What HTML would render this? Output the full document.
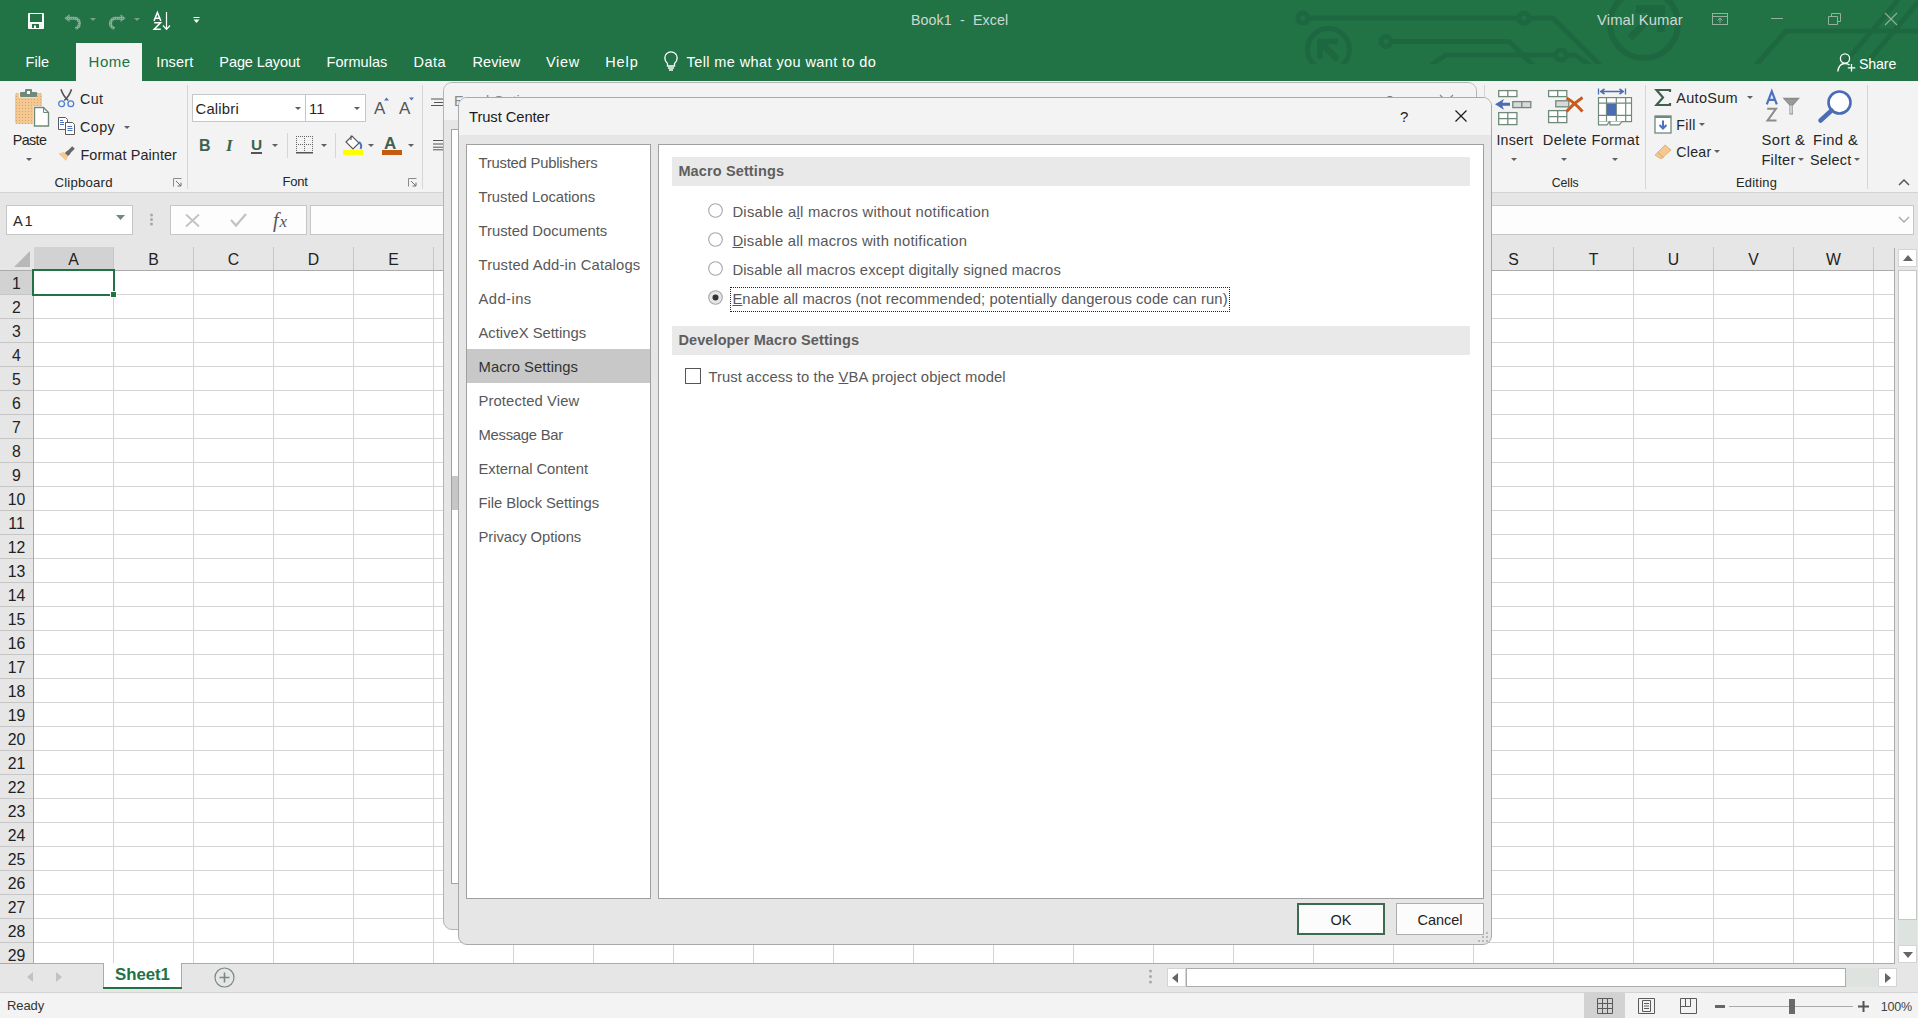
<!DOCTYPE html>
<html><head><meta charset="utf-8">
<style>
*{margin:0;padding:0;box-sizing:border-box}
html,body{width:1918px;height:1018px;overflow:hidden;background:#fff;font-family:"Liberation Sans",sans-serif;color:#262626}
.a{position:absolute;white-space:nowrap}
svg.a{overflow:visible}
</style></head><body>
<div class="a" style="left:0px;top:0px;width:1918px;height:81px;background:#217346"></div>
<svg class="a" style="left:0;top:0" width="1918" height="81" viewBox="0 0 1918 81">
<defs><clipPath id="cp"><rect x="0" y="0" width="1918" height="64"/></clipPath></defs>
<g fill="none" stroke="#1d6840" stroke-width="5" clip-path="url(#cp)">
<path d="M1303 18 H1553 L1600 65"/>
<circle cx="1303" cy="18" r="5" fill="#217346"/>
<circle cx="1524" cy="18" r="5" fill="#217346"/>
<path d="M1386 41.5 H1509 L1533 65"/>
<circle cx="1386" cy="41.5" r="5" fill="#217346"/>
<path d="M1431 65 L1446 55 H1575 L1590 65"/>
<circle cx="1561" cy="55" r="5" fill="#217346"/>
<circle cx="1328.4" cy="49.5" r="21" stroke-width="5"/>
<path d="M1320 42 L1338 60" stroke-width="6.5"/>
<path d="M1317 41.5 H1338 M1320 39 V59" stroke-width="5.5"/>
<circle cx="1644" cy="24" r="34" stroke-width="6"/>
<path d="M1630 38 L1656 12" stroke-width="7"/>
<path d="M1636 9 H1661 V32" stroke-width="8"/>
<path d="M1756 65 L1786 31 H1918"/>
<path d="M1843 65 L1898 0"/>
<path d="M1865 65 L1920 0"/>
</g></svg>
<svg class="a" style="left:28px;top:13px;" width="16" height="16" viewBox="0 0 16 16"><rect x="0" y="0" width="16" height="16" rx="1" fill="#fff"/><rect x="2" y="1" width="12" height="8" fill="#217346"/><rect x="1.5" y="10.5" width="13" height="4.5" fill="#f0f0f0"/><rect x="4" y="11" width="7" height="4" fill="#217346"/><rect x="6" y="12.5" width="2" height="2.5" fill="#fff"/></svg>
<svg class="a" style="left:63px;top:13px;" width="20" height="17" viewBox="0 0 20 17"><defs><pattern id="qd" width="2" height="2" patternUnits="userSpaceOnUse"><rect width="2" height="2" fill="#93a79b"/><rect x="1" y="1" width="1" height="1" fill="#217346" opacity="0.45"/></pattern></defs><path d="M1.3 5.2 L6.5 1.3 L6.5 9.1 Z" fill="url(#qd)"/><path d="M6 5.2 H12 A5.2 5.2 0 0 1 14 14.8 L12.5 15.5" fill="none" stroke="url(#qd)" stroke-width="3"/></svg>
<svg class="a" style="left:90px;top:18px;" width="6" height="3" viewBox="0 0 6 3"><path d="M0 0 H6 L3 3 Z" fill="#93a79b" opacity="0.8"/></svg>
<svg class="a" style="left:107px;top:13px;" width="20" height="17" viewBox="0 0 20 17"><path d="M18.7 5.2 L13.5 1.3 L13.5 9.1 Z" fill="url(#qd)"/><path d="M14 5.2 H8 A5.2 5.2 0 0 0 6 14.8 L7.5 15.5" fill="none" stroke="url(#qd)" stroke-width="3"/></svg>
<svg class="a" style="left:134px;top:18px;" width="6" height="3" viewBox="0 0 6 3"><path d="M0 0 H6 L3 3 Z" fill="#93a79b" opacity="0.8"/></svg>
<svg class="a" style="left:153px;top:12px;" width="18" height="18" viewBox="0 0 18 18"><path d="M1 8.9 L4.4 0.5 L7.8 8.9 M2.3 6.2 H6.5" fill="none" stroke="#fff" stroke-width="1.5"/><path d="M1.2 10.8 H7.5 L1.2 17.2 H7.8" fill="none" stroke="#fff" stroke-width="1.5"/><path d="M13.5 0 V17 M10 13.5 L13.5 17.3 L17 13.5" fill="none" stroke="#fff" stroke-width="1.2"/></svg>
<svg class="a" style="left:193px;top:17px;" width="7" height="6" viewBox="0 0 7 6"><rect x="0.5" y="0" width="6" height="1" fill="#fff"/><path d="M0.5 2.5 H6.5 L3.5 6 Z" fill="#fff"/></svg>
<div class="a" id="f0" style="left:911px;top:13.00px;font-size:14.2px;line-height:14.2px;color:#cfd8d2;font-weight:400;letter-spacing:0.127px;">Book1&nbsp;&nbsp;-&nbsp;&nbsp;Excel</div>
<div class="a" id="f1" style="left:1597px;top:13.00px;font-size:14.8px;line-height:14.8px;color:#cfd8d2;font-weight:400;letter-spacing:0.136px;">Vimal Kumar</div>
<svg class="a" style="left:1712px;top:13px;" width="16" height="12" viewBox="0 0 16 12"><rect x="0.5" y="0.5" width="15" height="11" fill="none" stroke="#94b19f" stroke-width="1"/><path d="M0.5 3.5 H15.5 M8 10 V5 M5.5 7.5 L8 5 L10.5 7.5" fill="none" stroke="#94b19f" stroke-width="1"/></svg>
<div class="a" style="left:1771px;top:18px;width:12px;height:1px;background:#94b19f"></div>
<svg class="a" style="left:1828px;top:13px;" width="13" height="12" viewBox="0 0 13 12"><path d="M0.5 3.5 H9.5 V11.5 H0.5 Z M3.5 3.5 V0.5 H12.5 V8.5 H9.5" fill="none" stroke="#94b19f" stroke-width="1"/></svg>
<svg class="a" style="left:1885px;top:13px;" width="12" height="12" viewBox="0 0 12 12"><path d="M0 0 L12 12 M12 0 L0 12" fill="none" stroke="#94b19f" stroke-width="1.1"/></svg>
<div class="a" style="left:76px;top:43px;width:66px;height:38px;background:#f3f3f3"></div>
<div class="a" id="f2" style="left:25.6px;top:55.00px;font-size:14.5px;line-height:14.5px;color:#fff;font-weight:400;letter-spacing:0.075px;">File</div>
<div class="a" id="f3" style="left:88.5px;top:54.00px;font-size:15px;line-height:15px;color:#217346;font-weight:400;letter-spacing:0.561px;">Home</div>
<div class="a" id="f4" style="left:156.2px;top:55.00px;font-size:14.5px;line-height:14.5px;color:#fff;font-weight:400;letter-spacing:0.167px;">Insert</div>
<div class="a" id="f5" style="left:219.3px;top:55.00px;font-size:14.5px;line-height:14.5px;color:#fff;font-weight:400;letter-spacing:-0.074px;">Page Layout</div>
<div class="a" id="f6" style="left:326.5px;top:55.00px;font-size:14.5px;line-height:14.5px;color:#fff;font-weight:400;letter-spacing:0.052px;">Formulas</div>
<div class="a" id="f7" style="left:413.6px;top:55.00px;font-size:14.5px;line-height:14.5px;color:#fff;font-weight:400;letter-spacing:0.486px;">Data</div>
<div class="a" id="f8" style="left:472.6px;top:55.00px;font-size:14.5px;line-height:14.5px;color:#fff;font-weight:400;letter-spacing:0.011px;">Review</div>
<div class="a" id="f9" style="left:546px;top:55.00px;font-size:14.5px;line-height:14.5px;color:#fff;font-weight:400;letter-spacing:0.709px;">View</div>
<div class="a" id="f10" style="left:605.2px;top:55.00px;font-size:14.5px;line-height:14.5px;color:#fff;font-weight:400;letter-spacing:0.924px;">Help</div>
<div class="a" id="f11" style="left:686.6px;top:55.00px;font-size:14.5px;line-height:14.5px;color:#fff;font-weight:400;letter-spacing:0.399px;">Tell me what you want to do</div>
<svg class="a" style="left:664px;top:51px;" width="14" height="20" viewBox="0 0 14 20"><path d="M3.5 12.5 C1.5 10.5 0.8 9 0.8 7 A6.2 6.2 0 0 1 13.2 7 C13.2 9 12.5 10.5 10.5 12.5 V15 H3.5 Z" fill="none" stroke="#fff" stroke-width="1.3"/><path d="M4 17 H10 M5 19 H9" stroke="#fff" stroke-width="1.3"/></svg>
<svg class="a" style="left:1837px;top:53px;" width="19" height="19" viewBox="0 0 19 19"><circle cx="8" cy="5.5" r="4.6" fill="none" stroke="#fff" stroke-width="1.3"/><path d="M0.8 18.5 C1.5 13 4.5 10.5 8 10.5 C10 10.5 11.5 11.2 12.5 12" fill="none" stroke="#fff" stroke-width="1.3"/><path d="M14.5 11 V18.5 M10.8 14.8 H18.3" stroke="#fff" stroke-width="1.3"/></svg>
<div class="a" id="f12" style="left:1859px;top:57.00px;font-size:14.2px;line-height:14.2px;color:#fff;font-weight:400;letter-spacing:-0.140px;">Share</div>
<div class="a" style="left:0px;top:81px;width:1918px;height:111px;background:#f3f3f3"></div>
<div class="a" style="left:0px;top:192px;width:1918px;height:1px;background:#d4d4d4"></div>
<svg class="a" style="left:15px;top:89px;" width="35" height="39" viewBox="0 0 35 39">
<defs><pattern id="dots" width="3" height="3" patternUnits="userSpaceOnUse"><rect width="3" height="3" fill="#f3c892"/><rect x="1" y="1" width="1" height="1" fill="#d9a66a"/></pattern></defs>
<rect x="0" y="4" width="27" height="31" rx="2" fill="url(#dots)"/>
<rect x="4" y="2.5" width="18" height="6" rx="1" fill="#f3f3f3"/>
<rect x="5" y="3" width="17" height="5" rx="1" fill="#6f8a7a"/>
<rect x="10" y="0" width="7" height="4" rx="1" fill="#6f8a7a"/>
<rect x="12" y="2" width="3" height="3" fill="#fff"/>
<path d="M18 17 H29 L34 22 V38 H18 Z" fill="#f3f3f3"/>
<path d="M19.5 18.5 H28.5 L33.5 23.5 V37 H19.5 Z" fill="#fff" stroke="#6f8a7a" stroke-width="1.4"/>
<path d="M28.5 18.5 V23.5 H33.5" fill="none" stroke="#6f8a7a" stroke-width="1"/>
</svg>
<div class="a" id="f13" style="left:12.7px;top:133.00px;font-size:14.3px;line-height:14.3px;color:#262626;font-weight:400;letter-spacing:-0.591px;">Paste</div>
<svg class="a" style="left:26px;top:157.8px;" width="6" height="3" viewBox="0 0 6 3"><path d="M0 0 H6 L3 3 Z" fill="#5f5f5f"/></svg>
<svg class="a" style="left:58px;top:89px;" width="17" height="19" viewBox="0 0 17 19">
<path d="M3 0.3 Q5 7 10.3 11.5 M13.5 0.3 Q11.5 7 6.2 11.5" fill="none" stroke="#555" stroke-width="1.6"/>
<circle cx="3.6" cy="14.8" r="2.9" fill="none" stroke="#4a7fd4" stroke-width="1.3"/>
<circle cx="12.8" cy="14.8" r="2.9" fill="none" stroke="#4a7fd4" stroke-width="1.3"/>
</svg>
<div class="a" id="f14" style="left:80px;top:92.00px;font-size:14.3px;line-height:14.3px;color:#262626;font-weight:400;letter-spacing:0.325px;">Cut</div>
<svg class="a" style="left:58px;top:117px;" width="18" height="19" viewBox="0 0 18 19">
<path d="M0.5 0.5 H7.5 L9.5 2.5 V12.5 H0.5 Z" fill="#fff" stroke="#5a5a5a" stroke-width="1"/>
<path d="M7.5 5.5 H14.5 L16.5 7.5 V17.5 H7.5 Z" fill="#fff" stroke="#5a5a5a" stroke-width="1"/>
<path d="M2 3.5 H5 M2 5.5 H6 M2 7.5 H6 M9.5 9.5 H14 M9.5 11.5 H14.5 M9.5 13.5 H14.5" stroke="#4a72c0" stroke-width="1"/>
</svg>
<div class="a" id="f15" style="left:80px;top:120.00px;font-size:14.3px;line-height:14.3px;color:#262626;font-weight:400;letter-spacing:0.436px;">Copy</div>
<svg class="a" style="left:124px;top:126.0px;" width="6" height="3" viewBox="0 0 6 3"><path d="M0 0 H6 L3 3 Z" fill="#5f5f5f"/></svg>
<svg class="a" style="left:58px;top:146px;" width="18" height="16" viewBox="0 0 18 16">
<path d="M15.5 1.5 L9.5 7.5" stroke="#666" stroke-width="3.5"/>
<path d="M11 6 L6 11" stroke="#666" stroke-width="4.5"/>
<path d="M0.5 7.5 L6 6 L10 10 L8 15 Z" fill="#f3c892"/>
</svg>
<div class="a" id="f16" style="left:80.4px;top:148.00px;font-size:14.4px;line-height:14.4px;color:#262626;font-weight:400;letter-spacing:0.102px;">Format Painter</div>
<div class="a" id="f17" style="left:54.5px;top:176.00px;font-size:13.2px;line-height:13.2px;color:#262626;font-weight:400;letter-spacing:0.193px;">Clipboard</div>
<svg class="a" style="left:173px;top:178px;" width="9" height="9" viewBox="0 0 9 9"><path d="M0.5 8.5 V0.5 H8.5" fill="none" stroke="#8a8a8a" stroke-width="1"/><path d="M3 3 L8 8 M8 4.5 V8 H4.5" fill="none" stroke="#707070" stroke-width="1"/></svg>
<div class="a" style="left:187px;top:85px;width:1px;height:104px;background:#d6d6d6"></div>
<div class="a" style="left:192px;top:94px;width:114px;height:28px;background:#fff;border:1px solid #c6c6c6"></div>
<div class="a" style="left:305px;top:94px;width:61px;height:28px;background:#fff;border:1px solid #c6c6c6"></div>
<div class="a" id="f18" style="left:195.5px;top:102.00px;font-size:14.8px;line-height:14.8px;color:#262626;font-weight:400;letter-spacing:0.210px;">Calibri</div>
<div class="a" style="left:309px;top:102.00px;font-size:14.8px;line-height:14.8px;color:#262626;font-weight:400;">11</div>
<svg class="a" style="left:295px;top:107.0px;" width="6" height="3" viewBox="0 0 6 3"><path d="M0 0 H6 L3 3 Z" fill="#5f5f5f"/></svg>
<svg class="a" style="left:354px;top:107.0px;" width="6" height="3" viewBox="0 0 6 3"><path d="M0 0 H6 L3 3 Z" fill="#5f5f5f"/></svg>
<svg class="a" style="left:374px;top:97px;" width="16" height="17" viewBox="0 0 16 17"><text x="0" y="16.5" font-family="Liberation Sans" font-size="17" fill="#555">A</text><path d="M10 3.5 L12.5 0.5 L15 3.5 Z" fill="#4a72c0"/></svg>
<svg class="a" style="left:399px;top:97px;" width="16" height="17" viewBox="0 0 16 17"><text x="0" y="16.5" font-family="Liberation Sans" font-size="17" fill="#555">A</text><path d="M10 0.5 L12.5 3.5 L15 0.5 Z" fill="#4a72c0"/></svg>
<div class="a" style="left:199px;top:138.00px;font-size:16px;line-height:16px;color:#3f6250;font-weight:700;">B</div>
<div class="a" style="left:226px;top:137.00px;font-size:17px;line-height:17px;color:#3f6250;font-weight:700;font-family:Liberation Serif;font-style:italic">I</div>
<div class="a" style="left:251px;top:137.00px;font-size:15.5px;line-height:15.5px;color:#3f6250;font-weight:700;">U</div>
<div class="a" style="left:251px;top:152px;width:11px;height:1.5px;background:#555"></div>
<svg class="a" style="left:272px;top:144.0px;" width="6" height="3" viewBox="0 0 6 3"><path d="M0 0 H6 L3 3 Z" fill="#5f5f5f"/></svg>
<div class="a" style="left:287px;top:133px;width:1px;height:25px;background:#d6d6d6"></div>
<svg class="a" style="left:296px;top:136px;" width="17" height="18" viewBox="0 0 17 18"><g fill="#666"><rect x="0" y="0" width="1" height="1"/><rect x="0" y="2" width="1" height="1"/><rect x="0" y="4" width="1" height="1"/><rect x="0" y="6" width="1" height="1"/><rect x="0" y="8" width="1" height="1"/><rect x="0" y="10" width="1" height="1"/><rect x="0" y="12" width="1" height="1"/><rect x="0" y="14" width="1" height="1"/><rect x="0" y="16" width="1" height="1"/><rect x="2" y="0" width="1" height="1"/><rect x="2" y="8" width="1" height="1"/><rect x="4" y="0" width="1" height="1"/><rect x="4" y="8" width="1" height="1"/><rect x="6" y="0" width="1" height="1"/><rect x="6" y="8" width="1" height="1"/><rect x="8" y="0" width="1" height="1"/><rect x="8" y="2" width="1" height="1"/><rect x="8" y="4" width="1" height="1"/><rect x="8" y="6" width="1" height="1"/><rect x="8" y="8" width="1" height="1"/><rect x="8" y="10" width="1" height="1"/><rect x="8" y="12" width="1" height="1"/><rect x="8" y="14" width="1" height="1"/><rect x="8" y="16" width="1" height="1"/><rect x="10" y="0" width="1" height="1"/><rect x="10" y="8" width="1" height="1"/><rect x="12" y="0" width="1" height="1"/><rect x="12" y="8" width="1" height="1"/><rect x="14" y="0" width="1" height="1"/><rect x="14" y="8" width="1" height="1"/><rect x="16" y="0" width="1" height="1"/><rect x="16" y="2" width="1" height="1"/><rect x="16" y="4" width="1" height="1"/><rect x="16" y="6" width="1" height="1"/><rect x="16" y="8" width="1" height="1"/><rect x="16" y="10" width="1" height="1"/><rect x="16" y="12" width="1" height="1"/><rect x="16" y="14" width="1" height="1"/><rect x="16" y="16" width="1" height="1"/></g><rect x="0" y="16" width="17" height="1.5" fill="#555"/></svg>
<svg class="a" style="left:321px;top:144.0px;" width="6" height="3" viewBox="0 0 6 3"><path d="M0 0 H6 L3 3 Z" fill="#5f5f5f"/></svg>
<div class="a" style="left:335px;top:133px;width:1px;height:25px;background:#d6d6d6"></div>
<svg class="a" style="left:343px;top:134px;" width="21" height="22" viewBox="0 0 21 22">
<path d="M3 8 L9 2 L16 9 L10 15 Z" fill="#fff" stroke="#555" stroke-width="1.1"/>
<path d="M8 1.5 V6" stroke="#555" stroke-width="1.1"/>
<path d="M16 8 Q19.5 11 17.5 15" fill="none" stroke="#4a72c0" stroke-width="2"/>
<rect x="0" y="16" width="20" height="5" fill="#ffff00"/>
</svg>
<svg class="a" style="left:368px;top:144.0px;" width="6" height="3" viewBox="0 0 6 3"><path d="M0 0 H6 L3 3 Z" fill="#5f5f5f"/></svg>
<svg class="a" style="left:382px;top:134px;" width="21" height="22" viewBox="0 0 21 22">
<text x="2" y="14.5" font-family="Liberation Sans" font-size="17" font-weight="700" fill="#3f6250">A</text>
<rect x="0" y="16" width="20" height="5" fill="#c55a11"/>
</svg>
<svg class="a" style="left:408px;top:144.0px;" width="6" height="3" viewBox="0 0 6 3"><path d="M0 0 H6 L3 3 Z" fill="#5f5f5f"/></svg>
<div class="a" id="f19" style="left:282.5px;top:175.00px;font-size:13px;line-height:13px;color:#262626;font-weight:400;letter-spacing:-0.205px;">Font</div>
<svg class="a" style="left:408px;top:178px;" width="9" height="9" viewBox="0 0 9 9"><path d="M0.5 8.5 V0.5 H8.5" fill="none" stroke="#8a8a8a" stroke-width="1"/><path d="M3 3 L8 8 M8 4.5 V8 H4.5" fill="none" stroke="#707070" stroke-width="1"/></svg>
<div class="a" style="left:422px;top:85px;width:1px;height:104px;background:#d6d6d6"></div>
<svg class="a" style="left:431px;top:98px;" width="13" height="9" viewBox="0 0 13 9"><path d="M0 1 H13 M3 4.5 H13 M0 7.5 H13" stroke="#555" stroke-width="1"/></svg>
<svg class="a" style="left:433px;top:139px;" width="11" height="12" viewBox="0 0 11 12"><path d="M0 1.5 H11 M0 5 H11 M0 8.2 H11 M0 10.8 H11" stroke="#555" stroke-width="1"/></svg>
<div class="a" style="left:1484px;top:85px;width:1px;height:104px;background:#d6d6d6"></div>
<svg class="a" style="left:1494px;top:88px;" width="40" height="40" viewBox="0 0 40 40">
<g fill="#fff" stroke="#6f8a7a" stroke-width="1.3">
<rect x="4.7" y="2.6" width="18.2" height="6"/><path d="M13.8 2.6 V8.6"/>
<rect x="4.7" y="24.6" width="18.2" height="12"/><path d="M13.8 24.6 V36.6 M4.7 30.6 H22.9"/>
</g>
<g fill="#d9d9d9" stroke="#6f8a7a" stroke-width="1.3"><rect x="18.8" y="13.6" width="18" height="6"/><path d="M27.8 13.6 V19.6"/></g>
<path d="M1 16.3 L10 10.9 L8.3 14.8 H16 V17.8 H8.3 L10 21.8 Z" fill="#4a6cb3"/>
</svg>
<svg class="a" style="left:1547px;top:88px;" width="40" height="40" viewBox="0 0 40 40">
<g fill="#fff" stroke="#6f8a7a" stroke-width="1.3">
<rect x="1.6" y="2.6" width="18.2" height="6"/><path d="M10.7 2.6 V8.6"/>
<rect x="1.6" y="22.6" width="18.2" height="12"/><path d="M10.7 22.6 V34.6 M1.6 28.6 H19.8"/>
</g>
<g fill="#d9d9d9" stroke="#6f8a7a" stroke-width="1.3"><rect x="8.8" y="12.8" width="13" height="6"/></g>
<path d="M19.5 10 Q27 14 35.5 23.5" fill="none" stroke="#c9591c" stroke-width="3"/>
<path d="M35.5 9.5 Q27 15 19.5 23.5" fill="none" stroke="#c9591c" stroke-width="3"/>
</svg>
<svg class="a" style="left:1597px;top:88px;" width="37" height="39" viewBox="0 0 37 39">
<path d="M1.5 0.5 V6.5 M28.5 0.5 V6.5 M3.5 3.5 H26.5" fill="none" stroke="#4a6cb3" stroke-width="1.3"/>
<path d="M7.5 1 L4 3.5 L7.5 6 M22.5 1 L26 3.5 L22.5 6" fill="none" stroke="#4a6cb3" stroke-width="1.6"/>
<g fill="#fff" stroke="#6f8a7a" stroke-width="1.2">
<rect x="1.5" y="9.6" width="33" height="24"/>
<path d="M9.5 9.6 V33.6 M19.3 9.6 V33.6 M28.7 9.6 V33.6 M1.5 15.2 H34.5 M1.5 27.3 H34.5"/>
<path d="M1.5 33.6 V36.8 H10 L12.5 33.6 M13 33.6 V36.8 H22 L25 33.6" />
</g>
<rect x="10" y="15.7" width="9" height="11.3" fill="#4a6cb3"/>
</svg>
<div class="a" id="f20" style="left:1496.5px;top:133.00px;font-size:14.2px;line-height:14.2px;color:#262626;font-weight:400;letter-spacing:0.183px;">Insert</div>
<div class="a" id="f21" style="left:1542.8px;top:133.00px;font-size:14.6px;line-height:14.6px;color:#262626;font-weight:400;letter-spacing:0.343px;">Delete</div>
<div class="a" id="f22" style="left:1591.5px;top:133.00px;font-size:14.6px;line-height:14.6px;color:#262626;font-weight:400;letter-spacing:0.296px;">Format</div>
<svg class="a" style="left:1511px;top:157.8px;" width="6" height="3" viewBox="0 0 6 3"><path d="M0 0 H6 L3 3 Z" fill="#5f5f5f"/></svg>
<svg class="a" style="left:1561px;top:157.8px;" width="6" height="3" viewBox="0 0 6 3"><path d="M0 0 H6 L3 3 Z" fill="#5f5f5f"/></svg>
<svg class="a" style="left:1612px;top:157.8px;" width="6" height="3" viewBox="0 0 6 3"><path d="M0 0 H6 L3 3 Z" fill="#5f5f5f"/></svg>
<div class="a" id="f23" style="left:1551.7px;top:177.00px;font-size:12.3px;line-height:12.3px;color:#262626;font-weight:400;letter-spacing:-0.086px;">Cells</div>
<div class="a" style="left:1645px;top:85px;width:1px;height:104px;background:#d6d6d6"></div>
<svg class="a" style="left:1655px;top:89px;" width="16" height="17" viewBox="0 0 16 17"><path d="M15 3 V1 H1.5 L8 8.5 L1.5 16 H15 V14" fill="none" stroke="#3f6250" stroke-width="2.2"/></svg>
<div class="a" id="f24" style="left:1676.3px;top:91.00px;font-size:14.5px;line-height:14.5px;color:#262626;font-weight:400;letter-spacing:0.274px;">AutoSum</div>
<svg class="a" style="left:1747px;top:96.0px;" width="6" height="3" viewBox="0 0 6 3"><path d="M0 0 H6 L3 3 Z" fill="#5f5f5f"/></svg>
<svg class="a" style="left:1654px;top:115px;" width="18" height="19" viewBox="0 0 18 19"><rect x="1" y="1" width="16" height="17" fill="#fff" stroke="#6f8a7a" stroke-width="1.3"/><rect x="1" y="1" width="16" height="2" fill="#6f8a7a"/><path d="M9 5.5 V13 M5.5 10 L9 13.5 L12.5 10" fill="none" stroke="#4a72c0" stroke-width="2"/></svg>
<div class="a" id="f25" style="left:1676.3px;top:118.00px;font-size:14.2px;line-height:14.2px;color:#262626;font-weight:400;letter-spacing:0.358px;">Fill</div>
<svg class="a" style="left:1699px;top:123.0px;" width="6" height="3" viewBox="0 0 6 3"><path d="M0 0 H6 L3 3 Z" fill="#5f5f5f"/></svg>
<svg class="a" style="left:1654px;top:142px;" width="18" height="18" viewBox="0 0 18 18"><path d="M1 13 L11 3 L17 8 L7 17 Z" fill="#f3c892" stroke="#e0a860" stroke-width="0.8"/><path d="M4 10.5 L9.5 15.5" stroke="#e0a860" stroke-width="1"/></svg>
<div class="a" id="f26" style="left:1676.3px;top:145.00px;font-size:14.2px;line-height:14.2px;color:#262626;font-weight:400;letter-spacing:0.248px;">Clear</div>
<svg class="a" style="left:1714px;top:150.0px;" width="6" height="3" viewBox="0 0 6 3"><path d="M0 0 H6 L3 3 Z" fill="#5f5f5f"/></svg>
<svg class="a" style="left:1765px;top:90px;" width="36" height="33" viewBox="0 0 36 33">
<path d="M1.8 14.3 L6.8 1.3 L11.8 14.3 M3.7 9.8 H9.9" fill="none" stroke="#4a72c0" stroke-width="2.2"/>
<path d="M2.2 18.8 H11 L2.5 30.6 H11.5" fill="none" stroke="#8c8c8c" stroke-width="2"/>
<path d="M17.5 7.8 H35 L28 15.5 V24.5 H24.5 V15.5 Z" fill="#8a8a8a"/>
<path d="M20 9.5 H32.5 L26.2 15.5 Z" fill="#9a9a9a"/>
<rect x="25" y="15.5" width="2.5" height="8" fill="#cfcfcf"/>
</svg>
<div class="a" id="f27" style="left:1761.4px;top:133.00px;font-size:14.8px;line-height:14.8px;color:#262626;font-weight:400;letter-spacing:0.475px;">Sort &amp;</div>
<div class="a" id="f28" style="left:1761.4px;top:153.00px;font-size:14.6px;line-height:14.6px;color:#262626;font-weight:400;letter-spacing:0.293px;">Filter</div>
<svg class="a" style="left:1798px;top:158.0px;" width="6" height="3" viewBox="0 0 6 3"><path d="M0 0 H6 L3 3 Z" fill="#5f5f5f"/></svg>
<svg class="a" style="left:1817px;top:89px;" width="36" height="36" viewBox="0 0 36 36"><circle cx="22.5" cy="13.5" r="11" fill="#fff" stroke="#4a6cb3" stroke-width="2.6"/><path d="M14.5 21.5 L3.5 31.5" stroke="#4a6cb3" stroke-width="4.5" stroke-linecap="round"/></svg>
<div class="a" id="f29" style="left:1813px;top:133.00px;font-size:14.8px;line-height:14.8px;color:#262626;font-weight:400;letter-spacing:0.427px;">Find &amp;</div>
<div class="a" id="f30" style="left:1810px;top:153.00px;font-size:14.4px;line-height:14.4px;color:#262626;font-weight:400;letter-spacing:0.240px;">Select</div>
<svg class="a" style="left:1854px;top:158.0px;" width="6" height="3" viewBox="0 0 6 3"><path d="M0 0 H6 L3 3 Z" fill="#5f5f5f"/></svg>
<div class="a" id="f31" style="left:1736px;top:177.00px;font-size:12.9px;line-height:12.9px;color:#262626;font-weight:400;letter-spacing:0.230px;">Editing</div>
<div class="a" style="left:1867px;top:85px;width:1px;height:104px;background:#d6d6d6"></div>
<svg class="a" style="left:1898px;top:178px;" width="12" height="8" viewBox="0 0 12 8"><path d="M1 7 L6 2 L11 7" fill="none" stroke="#555" stroke-width="1.5"/></svg>
<div class="a" style="left:0px;top:193px;width:1918px;height:55px;background:#e6e6e6"></div>
<div class="a" style="left:6px;top:205px;width:127px;height:30px;background:#fff;border:1px solid #c6c6c6"></div>
<div class="a" id="f32" style="left:13px;top:214.00px;font-size:14.7px;line-height:14.7px;color:#262626;font-weight:400;letter-spacing:1.631px;">A1</div>
<svg class="a" style="left:116px;top:215px;" width="9" height="5" viewBox="0 0 9 5"><path d="M0 0 H9 L4.5 5 Z" fill="#6f8a7a"/></svg>
<svg class="a" style="left:149px;top:213px;" width="5" height="13" viewBox="0 0 5 13"><circle cx="2.5" cy="2" r="1.5" fill="#a9a9a9"/><circle cx="2.5" cy="6.5" r="1.5" fill="#a9a9a9"/><circle cx="2.5" cy="11" r="1.5" fill="#a9a9a9"/></svg>
<div class="a" style="left:170px;top:205px;width:137px;height:30px;background:#fdfdfd;border:1px solid #c6c6c6"></div>
<svg class="a" style="left:185px;top:214px;" width="15" height="13" viewBox="0 0 15 13"><path d="M1 0.5 L14 12.5 M14 0.5 L1 12.5" stroke="#c2c2c2" stroke-width="1.8"/></svg>
<svg class="a" style="left:230px;top:213px;" width="17" height="14" viewBox="0 0 17 14"><path d="M1 7 L6 12.5 L16 1" fill="none" stroke="#c2c2c2" stroke-width="2.2"/></svg>
<div class="a" style="left:273px;top:210.00px;font-size:20px;line-height:20px;color:#555;font-weight:400;font-family:Liberation Serif"><i>f</i><i style="font-size:17px;margin-left:1px">x</i></div>
<div class="a" style="left:310px;top:205px;width:1604px;height:30px;background:#fdfdfd;border:1px solid #c6c6c6"></div>
<svg class="a" style="left:1898px;top:216px;" width="12" height="7" viewBox="0 0 12 7"><path d="M1 1 L6 6 L11 1" fill="none" stroke="#a9a9a9" stroke-width="1.4"/></svg>
<div class="a" style="left:33px;top:271px;width:1862px;height:692px;background-color:#fff;background-image:linear-gradient(to right,#d4d4d4 1px,transparent 1px),linear-gradient(to bottom,#d4d4d4 1px,transparent 1px);background-size:80px 24px;background-position:80px 23px"></div>
<div class="a" style="left:1894px;top:248px;width:1px;height:715px;background:#ababab"></div>
<div class="a" style="left:0px;top:247px;width:1894px;height:23px;background:#e6e6e6"></div>
<div class="a" style="left:0px;top:270px;width:1894px;height:1px;background:#ababab"></div>
<div class="a" style="left:34px;top:247px;width:79px;height:23px;background:#d2d2d2"></div>
<div class="a" style="left:113px;top:247px;width:1px;height:23px;background:#c6c6c6"></div>
<div class="a" style="left:-126.5px;width:400px;text-align:center;top:252.00px;font-size:15.8px;line-height:15.8px;color:#222;font-weight:400;">A</div>
<div class="a" style="left:193px;top:247px;width:1px;height:23px;background:#c6c6c6"></div>
<div class="a" style="left:-46.5px;width:400px;text-align:center;top:252.00px;font-size:15.8px;line-height:15.8px;color:#222;font-weight:400;">B</div>
<div class="a" style="left:273px;top:247px;width:1px;height:23px;background:#c6c6c6"></div>
<div class="a" style="left:33.5px;width:400px;text-align:center;top:252.00px;font-size:15.8px;line-height:15.8px;color:#222;font-weight:400;">C</div>
<div class="a" style="left:353px;top:247px;width:1px;height:23px;background:#c6c6c6"></div>
<div class="a" style="left:113.5px;width:400px;text-align:center;top:252.00px;font-size:15.8px;line-height:15.8px;color:#222;font-weight:400;">D</div>
<div class="a" style="left:433px;top:247px;width:1px;height:23px;background:#c6c6c6"></div>
<div class="a" style="left:193.5px;width:400px;text-align:center;top:252.00px;font-size:15.8px;line-height:15.8px;color:#222;font-weight:400;">E</div>
<div class="a" style="left:513px;top:247px;width:1px;height:23px;background:#c6c6c6"></div>
<div class="a" style="left:273.5px;width:400px;text-align:center;top:252.00px;font-size:15.8px;line-height:15.8px;color:#222;font-weight:400;">F</div>
<div class="a" style="left:593px;top:247px;width:1px;height:23px;background:#c6c6c6"></div>
<div class="a" style="left:353.5px;width:400px;text-align:center;top:252.00px;font-size:15.8px;line-height:15.8px;color:#222;font-weight:400;">G</div>
<div class="a" style="left:673px;top:247px;width:1px;height:23px;background:#c6c6c6"></div>
<div class="a" style="left:433.5px;width:400px;text-align:center;top:252.00px;font-size:15.8px;line-height:15.8px;color:#222;font-weight:400;">H</div>
<div class="a" style="left:753px;top:247px;width:1px;height:23px;background:#c6c6c6"></div>
<div class="a" style="left:513.5px;width:400px;text-align:center;top:252.00px;font-size:15.8px;line-height:15.8px;color:#222;font-weight:400;">I</div>
<div class="a" style="left:833px;top:247px;width:1px;height:23px;background:#c6c6c6"></div>
<div class="a" style="left:593.5px;width:400px;text-align:center;top:252.00px;font-size:15.8px;line-height:15.8px;color:#222;font-weight:400;">J</div>
<div class="a" style="left:913px;top:247px;width:1px;height:23px;background:#c6c6c6"></div>
<div class="a" style="left:673.5px;width:400px;text-align:center;top:252.00px;font-size:15.8px;line-height:15.8px;color:#222;font-weight:400;">K</div>
<div class="a" style="left:993px;top:247px;width:1px;height:23px;background:#c6c6c6"></div>
<div class="a" style="left:753.5px;width:400px;text-align:center;top:252.00px;font-size:15.8px;line-height:15.8px;color:#222;font-weight:400;">L</div>
<div class="a" style="left:1073px;top:247px;width:1px;height:23px;background:#c6c6c6"></div>
<div class="a" style="left:833.5px;width:400px;text-align:center;top:252.00px;font-size:15.8px;line-height:15.8px;color:#222;font-weight:400;">M</div>
<div class="a" style="left:1153px;top:247px;width:1px;height:23px;background:#c6c6c6"></div>
<div class="a" style="left:913.5px;width:400px;text-align:center;top:252.00px;font-size:15.8px;line-height:15.8px;color:#222;font-weight:400;">N</div>
<div class="a" style="left:1233px;top:247px;width:1px;height:23px;background:#c6c6c6"></div>
<div class="a" style="left:993.5px;width:400px;text-align:center;top:252.00px;font-size:15.8px;line-height:15.8px;color:#222;font-weight:400;">O</div>
<div class="a" style="left:1313px;top:247px;width:1px;height:23px;background:#c6c6c6"></div>
<div class="a" style="left:1073.5px;width:400px;text-align:center;top:252.00px;font-size:15.8px;line-height:15.8px;color:#222;font-weight:400;">P</div>
<div class="a" style="left:1393px;top:247px;width:1px;height:23px;background:#c6c6c6"></div>
<div class="a" style="left:1153.5px;width:400px;text-align:center;top:252.00px;font-size:15.8px;line-height:15.8px;color:#222;font-weight:400;">Q</div>
<div class="a" style="left:1473px;top:247px;width:1px;height:23px;background:#c6c6c6"></div>
<div class="a" style="left:1233.5px;width:400px;text-align:center;top:252.00px;font-size:15.8px;line-height:15.8px;color:#222;font-weight:400;">R</div>
<div class="a" style="left:1553px;top:247px;width:1px;height:23px;background:#c6c6c6"></div>
<div class="a" style="left:1313.5px;width:400px;text-align:center;top:252.00px;font-size:15.8px;line-height:15.8px;color:#222;font-weight:400;">S</div>
<div class="a" style="left:1633px;top:247px;width:1px;height:23px;background:#c6c6c6"></div>
<div class="a" style="left:1393.5px;width:400px;text-align:center;top:252.00px;font-size:15.8px;line-height:15.8px;color:#222;font-weight:400;">T</div>
<div class="a" style="left:1713px;top:247px;width:1px;height:23px;background:#c6c6c6"></div>
<div class="a" style="left:1473.5px;width:400px;text-align:center;top:252.00px;font-size:15.8px;line-height:15.8px;color:#222;font-weight:400;">U</div>
<div class="a" style="left:1793px;top:247px;width:1px;height:23px;background:#c6c6c6"></div>
<div class="a" style="left:1553.5px;width:400px;text-align:center;top:252.00px;font-size:15.8px;line-height:15.8px;color:#222;font-weight:400;">V</div>
<div class="a" style="left:1873px;top:247px;width:1px;height:23px;background:#c6c6c6"></div>
<div class="a" style="left:1633.5px;width:400px;text-align:center;top:252.00px;font-size:15.8px;line-height:15.8px;color:#222;font-weight:400;">W</div>
<div class="a" style="left:1873px;top:247px;width:1px;height:23px;background:#c6c6c6"></div>
<svg class="a" style="left:14px;top:251px;" width="17" height="17" viewBox="0 0 17 17"><path d="M16 0 V16 H0 Z" fill="#b8b8b8"/></svg>
<div class="a" style="left:0px;top:271px;width:33px;height:692px;background:#e6e6e6"></div>
<div class="a" style="left:33px;top:271px;width:1px;height:692px;background:#ababab"></div>
<div class="a" style="left:0px;top:271px;width:33px;height:23px;background:#d2d2d2"></div>
<div class="a" style="left:0px;top:294px;width:33px;height:1px;background:#c6c6c6"></div>
<div class="a" style="left:-183.5px;width:400px;text-align:center;top:276.00px;font-size:15.8px;line-height:15.8px;color:#222;font-weight:400;">1</div>
<div class="a" style="left:0px;top:318px;width:33px;height:1px;background:#c6c6c6"></div>
<div class="a" style="left:-183.5px;width:400px;text-align:center;top:300.00px;font-size:15.8px;line-height:15.8px;color:#222;font-weight:400;">2</div>
<div class="a" style="left:0px;top:342px;width:33px;height:1px;background:#c6c6c6"></div>
<div class="a" style="left:-183.5px;width:400px;text-align:center;top:324.00px;font-size:15.8px;line-height:15.8px;color:#222;font-weight:400;">3</div>
<div class="a" style="left:0px;top:366px;width:33px;height:1px;background:#c6c6c6"></div>
<div class="a" style="left:-183.5px;width:400px;text-align:center;top:348.00px;font-size:15.8px;line-height:15.8px;color:#222;font-weight:400;">4</div>
<div class="a" style="left:0px;top:390px;width:33px;height:1px;background:#c6c6c6"></div>
<div class="a" style="left:-183.5px;width:400px;text-align:center;top:372.00px;font-size:15.8px;line-height:15.8px;color:#222;font-weight:400;">5</div>
<div class="a" style="left:0px;top:414px;width:33px;height:1px;background:#c6c6c6"></div>
<div class="a" style="left:-183.5px;width:400px;text-align:center;top:396.00px;font-size:15.8px;line-height:15.8px;color:#222;font-weight:400;">6</div>
<div class="a" style="left:0px;top:438px;width:33px;height:1px;background:#c6c6c6"></div>
<div class="a" style="left:-183.5px;width:400px;text-align:center;top:420.00px;font-size:15.8px;line-height:15.8px;color:#222;font-weight:400;">7</div>
<div class="a" style="left:0px;top:462px;width:33px;height:1px;background:#c6c6c6"></div>
<div class="a" style="left:-183.5px;width:400px;text-align:center;top:444.00px;font-size:15.8px;line-height:15.8px;color:#222;font-weight:400;">8</div>
<div class="a" style="left:0px;top:486px;width:33px;height:1px;background:#c6c6c6"></div>
<div class="a" style="left:-183.5px;width:400px;text-align:center;top:468.00px;font-size:15.8px;line-height:15.8px;color:#222;font-weight:400;">9</div>
<div class="a" style="left:0px;top:510px;width:33px;height:1px;background:#c6c6c6"></div>
<div class="a" style="left:-183.5px;width:400px;text-align:center;top:492.00px;font-size:15.8px;line-height:15.8px;color:#222;font-weight:400;">10</div>
<div class="a" style="left:0px;top:534px;width:33px;height:1px;background:#c6c6c6"></div>
<div class="a" style="left:-183.5px;width:400px;text-align:center;top:516.00px;font-size:15.8px;line-height:15.8px;color:#222;font-weight:400;">11</div>
<div class="a" style="left:0px;top:558px;width:33px;height:1px;background:#c6c6c6"></div>
<div class="a" style="left:-183.5px;width:400px;text-align:center;top:540.00px;font-size:15.8px;line-height:15.8px;color:#222;font-weight:400;">12</div>
<div class="a" style="left:0px;top:582px;width:33px;height:1px;background:#c6c6c6"></div>
<div class="a" style="left:-183.5px;width:400px;text-align:center;top:564.00px;font-size:15.8px;line-height:15.8px;color:#222;font-weight:400;">13</div>
<div class="a" style="left:0px;top:606px;width:33px;height:1px;background:#c6c6c6"></div>
<div class="a" style="left:-183.5px;width:400px;text-align:center;top:588.00px;font-size:15.8px;line-height:15.8px;color:#222;font-weight:400;">14</div>
<div class="a" style="left:0px;top:630px;width:33px;height:1px;background:#c6c6c6"></div>
<div class="a" style="left:-183.5px;width:400px;text-align:center;top:612.00px;font-size:15.8px;line-height:15.8px;color:#222;font-weight:400;">15</div>
<div class="a" style="left:0px;top:654px;width:33px;height:1px;background:#c6c6c6"></div>
<div class="a" style="left:-183.5px;width:400px;text-align:center;top:636.00px;font-size:15.8px;line-height:15.8px;color:#222;font-weight:400;">16</div>
<div class="a" style="left:0px;top:678px;width:33px;height:1px;background:#c6c6c6"></div>
<div class="a" style="left:-183.5px;width:400px;text-align:center;top:660.00px;font-size:15.8px;line-height:15.8px;color:#222;font-weight:400;">17</div>
<div class="a" style="left:0px;top:702px;width:33px;height:1px;background:#c6c6c6"></div>
<div class="a" style="left:-183.5px;width:400px;text-align:center;top:684.00px;font-size:15.8px;line-height:15.8px;color:#222;font-weight:400;">18</div>
<div class="a" style="left:0px;top:726px;width:33px;height:1px;background:#c6c6c6"></div>
<div class="a" style="left:-183.5px;width:400px;text-align:center;top:708.00px;font-size:15.8px;line-height:15.8px;color:#222;font-weight:400;">19</div>
<div class="a" style="left:0px;top:750px;width:33px;height:1px;background:#c6c6c6"></div>
<div class="a" style="left:-183.5px;width:400px;text-align:center;top:732.00px;font-size:15.8px;line-height:15.8px;color:#222;font-weight:400;">20</div>
<div class="a" style="left:0px;top:774px;width:33px;height:1px;background:#c6c6c6"></div>
<div class="a" style="left:-183.5px;width:400px;text-align:center;top:756.00px;font-size:15.8px;line-height:15.8px;color:#222;font-weight:400;">21</div>
<div class="a" style="left:0px;top:798px;width:33px;height:1px;background:#c6c6c6"></div>
<div class="a" style="left:-183.5px;width:400px;text-align:center;top:780.00px;font-size:15.8px;line-height:15.8px;color:#222;font-weight:400;">22</div>
<div class="a" style="left:0px;top:822px;width:33px;height:1px;background:#c6c6c6"></div>
<div class="a" style="left:-183.5px;width:400px;text-align:center;top:804.00px;font-size:15.8px;line-height:15.8px;color:#222;font-weight:400;">23</div>
<div class="a" style="left:0px;top:846px;width:33px;height:1px;background:#c6c6c6"></div>
<div class="a" style="left:-183.5px;width:400px;text-align:center;top:828.00px;font-size:15.8px;line-height:15.8px;color:#222;font-weight:400;">24</div>
<div class="a" style="left:0px;top:870px;width:33px;height:1px;background:#c6c6c6"></div>
<div class="a" style="left:-183.5px;width:400px;text-align:center;top:852.00px;font-size:15.8px;line-height:15.8px;color:#222;font-weight:400;">25</div>
<div class="a" style="left:0px;top:894px;width:33px;height:1px;background:#c6c6c6"></div>
<div class="a" style="left:-183.5px;width:400px;text-align:center;top:876.00px;font-size:15.8px;line-height:15.8px;color:#222;font-weight:400;">26</div>
<div class="a" style="left:0px;top:918px;width:33px;height:1px;background:#c6c6c6"></div>
<div class="a" style="left:-183.5px;width:400px;text-align:center;top:900.00px;font-size:15.8px;line-height:15.8px;color:#222;font-weight:400;">27</div>
<div class="a" style="left:0px;top:942px;width:33px;height:1px;background:#c6c6c6"></div>
<div class="a" style="left:-183.5px;width:400px;text-align:center;top:924.00px;font-size:15.8px;line-height:15.8px;color:#222;font-weight:400;">28</div>
<div class="a" style="left:0px;top:966px;width:33px;height:1px;background:#c6c6c6"></div>
<div class="a" style="left:-183.5px;width:400px;text-align:center;top:948.00px;font-size:15.8px;line-height:15.8px;color:#222;font-weight:400;">29</div>
<div class="a" style="left:32px;top:269px;width:83px;height:27px;border:2px solid #217346"></div>
<div class="a" style="left:111px;top:292px;width:5px;height:5px;background:#217346;outline:1px solid #fff"></div>
<div class="a" style="left:1895px;top:248px;width:23px;height:715px;background:#e6e6e6"></div>
<div class="a" style="left:1898px;top:249px;width:19px;height:18px;background:#fff;border:1px solid #d4d4d4"></div>
<svg class="a" style="left:1903px;top:255px;" width="10" height="6" viewBox="0 0 10 6"><path d="M0 6 L5 0 L10 6 Z" fill="#666"/></svg>
<div class="a" style="left:1898px;top:920px;width:19px;height:25px;background:#dde3df"></div>
<div class="a" style="left:1898px;top:270px;width:19px;height:650px;background:#fff;border:1px solid #c6c6c6"></div>
<div class="a" style="left:1898px;top:945px;width:19px;height:18px;background:#fff;border:1px solid #d4d4d4"></div>
<svg class="a" style="left:1903px;top:952px;" width="10" height="6" viewBox="0 0 10 6"><path d="M0 0 L10 0 L5 6 Z" fill="#666"/></svg>
<div class="a" style="left:0px;top:963px;width:1918px;height:29px;background:#e6e6e6"></div>
<div class="a" style="left:0px;top:963px;width:1895px;height:1px;background:#ababab"></div>
<svg class="a" style="left:27px;top:972px;" width="6" height="10" viewBox="0 0 6 10"><path d="M6 0 V10 L0 5 Z" fill="#c2c2c2"/></svg>
<svg class="a" style="left:56px;top:972px;" width="6" height="10" viewBox="0 0 6 10"><path d="M0 0 V10 L6 5 Z" fill="#c2c2c2"/></svg>
<div class="a" style="left:103px;top:963px;width:79px;height:25px;background:#fff;border-left:1px solid #ababab;border-right:1px solid #ababab"></div>
<div class="a" style="left:103px;top:987px;width:79px;height:2px;background:#217346"></div>
<div class="a" id="f33" style="left:115px;top:967.00px;font-size:16.8px;line-height:16.8px;color:#217346;font-weight:700;letter-spacing:-0.026px;">Sheet1</div>
<svg class="a" style="left:214px;top:967px;" width="21" height="21" viewBox="0 0 21 21"><circle cx="10.5" cy="10.5" r="9.5" fill="none" stroke="#7a8a80" stroke-width="1.2"/><path d="M10.5 5.5 V15.5 M5.5 10.5 H15.5" stroke="#7a8a80" stroke-width="1.6"/></svg>
<svg class="a" style="left:1148px;top:969px;" width="5" height="15" viewBox="0 0 5 15"><circle cx="2.5" cy="2" r="1.5" fill="#a9a9a9"/><circle cx="2.5" cy="7.5" r="1.5" fill="#a9a9a9"/><circle cx="2.5" cy="13" r="1.5" fill="#a9a9a9"/></svg>
<div class="a" style="left:1167px;top:968px;width:730px;height:19px;background:#dfe3e0"></div>
<div class="a" style="left:1167px;top:968px;width:19px;height:19px;background:#fff;border:1px solid #d4d4d4"></div>
<svg class="a" style="left:1172px;top:973px;" width="6" height="10" viewBox="0 0 6 10"><path d="M6 0 V10 L0 5 Z" fill="#666"/></svg>
<div class="a" style="left:1186px;top:968px;width:660px;height:19px;background:#fff;border:1px solid #ababab"></div>
<div class="a" style="left:1878px;top:968px;width:19px;height:19px;background:#fff;border:1px solid #d4d4d4"></div>
<svg class="a" style="left:1885px;top:973px;" width="6" height="10" viewBox="0 0 6 10"><path d="M0 0 V10 L6 5 Z" fill="#666"/></svg>
<div class="a" style="left:0px;top:992px;width:1918px;height:26px;background:#f3f3f3"></div>
<div class="a" style="left:0px;top:992px;width:1918px;height:1px;background:#d4d4d4"></div>
<div class="a" id="f34" style="left:7px;top:999.00px;font-size:13px;line-height:13px;color:#333;font-weight:400;letter-spacing:-0.095px;">Ready</div>
<div class="a" style="left:1584px;top:993px;width:41px;height:25px;background:#d2d2d2"></div>
<svg class="a" style="left:1597px;top:998px;" width="16" height="16" viewBox="0 0 16 16"><path d="M0.5 0.5 H15.5 V15.5 H0.5 Z M5.5 0.5 V15.5 M10.5 0.5 V15.5 M0.5 5.5 H15.5 M0.5 10.5 H15.5" fill="none" stroke="#5a5a5a" stroke-width="1"/></svg>
<svg class="a" style="left:1638px;top:998px;" width="17" height="16" viewBox="0 0 17 16"><path d="M0.5 0.5 H16.5 V15.5 H0.5 Z M4.5 2.5 H12.5 V13.5 H4.5 Z M6 5.5 H11 M6 8 H11 M6 10.5 H11" fill="none" stroke="#5a5a5a" stroke-width="1"/></svg>
<svg class="a" style="left:1680px;top:998px;" width="17" height="16" viewBox="0 0 17 16"><path d="M0.5 0.5 H16.5 V15.5 H0.5 Z M5.5 0.5 V8.5 M10.5 0.5 V8.5 M0.5 8.5 H10.5" fill="none" stroke="#5a5a5a" stroke-width="1"/></svg>
<div class="a" style="left:1715px;top:1005px;width:10px;height:2.5px;background:#666"></div>
<div class="a" style="left:1729px;top:1006px;width:124px;height:1px;background:#a9a9a9"></div>
<div class="a" style="left:1789px;top:999px;width:6px;height:15px;background:#6a6a6a"></div>
<svg class="a" style="left:1858px;top:1001px;" width="11" height="11" viewBox="0 0 11 11"><path d="M5.5 0 V11 M0 5.5 H11" stroke="#555" stroke-width="2"/></svg>
<div class="a" id="f35" style="left:1880.8px;top:1001.00px;font-size:12.5px;line-height:12.5px;color:#444;font-weight:400;letter-spacing:-0.195px;">100%</div>
<div class="a" style="left:443px;top:82px;width:1034px;height:848px;background:#e6e6e6;border:1px solid #b4b4b4;border-radius:9px;overflow:hidden"></div>
<div class="a" style="left:444px;top:83px;width:1032px;height:37px;background:#f3f3f3;border-radius:8px 8px 0 0"></div>
<div class="a" style="left:454px;top:94.00px;font-size:14.4px;line-height:14.4px;color:#8a8a8a;font-weight:400;">Excel Options</div>
<div class="a" style="left:451px;top:129px;width:10px;height:755px;background:#fff;border:1px solid #a0a0a0"></div>
<div class="a" style="left:452px;top:476px;width:6px;height:34px;background:#c6c6c6"></div>
<div class="a" style="left:1385.5px;top:93.00px;font-size:15px;line-height:15px;color:#777;font-weight:400;">?</div>
<svg class="a" style="left:1440px;top:95px;" width="13" height="4" viewBox="0 0 13 4"><path d="M0 0 L4 4 M13 0 L9 4" stroke="#888" stroke-width="1.1"/></svg>
<div class="a" style="left:458px;top:97px;width:1034px;height:848px;background:#e6e6e6;border:1px solid #a9a9a9;border-radius:9px;overflow:hidden"></div>
<div class="a" style="left:459px;top:98px;width:1032px;height:37px;background:#f3f3f3;border-radius:8px 8px 0 0"></div>
<div class="a" id="f36" style="left:469px;top:110.00px;font-size:14.8px;line-height:14.8px;color:#1a1a1a;font-weight:400;letter-spacing:-0.099px;">Trust Center</div>
<div class="a" style="left:1400px;top:109.00px;font-size:15px;line-height:15px;color:#1a1a1a;font-weight:400;">?</div>
<svg class="a" style="left:1455px;top:110px;" width="12" height="12" viewBox="0 0 12 12"><path d="M0.5 0.5 L11.5 11.5 M11.5 0.5 L0.5 11.5" stroke="#1a1a1a" stroke-width="1.2"/></svg>
<div class="a" style="left:466px;top:144px;width:185px;height:755px;background:#fff;border:1px solid #a0a0a0"></div>
<div class="a" style="left:467px;top:349px;width:183px;height:34px;background:#c8c8c8"></div>
<div class="a" id="f37" style="left:478.5px;top:156.00px;font-size:14.8px;line-height:14.8px;color:#585858;font-weight:400;letter-spacing:-0.212px;">Trusted Publishers</div>
<div class="a" id="f38" style="left:478.5px;top:190.00px;font-size:14.8px;line-height:14.8px;color:#585858;font-weight:400;letter-spacing:-0.024px;">Trusted Locations</div>
<div class="a" id="f39" style="left:478.5px;top:224.00px;font-size:14.8px;line-height:14.8px;color:#585858;font-weight:400;letter-spacing:0.009px;">Trusted Documents</div>
<div class="a" id="f40" style="left:478.5px;top:258.00px;font-size:14.8px;line-height:14.8px;color:#585858;font-weight:400;letter-spacing:0.159px;">Trusted Add-in Catalogs</div>
<div class="a" id="f41" style="left:478.5px;top:292.00px;font-size:14.8px;line-height:14.8px;color:#585858;font-weight:400;letter-spacing:0.421px;">Add-ins</div>
<div class="a" id="f42" style="left:478.5px;top:326.00px;font-size:14.8px;line-height:14.8px;color:#585858;font-weight:400;letter-spacing:-0.010px;">ActiveX Settings</div>
<div class="a" id="f43" style="left:478.5px;top:360.00px;font-size:14.8px;line-height:14.8px;color:#333;font-weight:400;letter-spacing:0.062px;">Macro Settings</div>
<div class="a" id="f44" style="left:478.5px;top:394.00px;font-size:14.8px;line-height:14.8px;color:#585858;font-weight:400;letter-spacing:0.110px;">Protected View</div>
<div class="a" id="f45" style="left:478.5px;top:428.00px;font-size:14.8px;line-height:14.8px;color:#585858;font-weight:400;letter-spacing:-0.249px;">Message Bar</div>
<div class="a" id="f46" style="left:478.5px;top:462.00px;font-size:14.8px;line-height:14.8px;color:#585858;font-weight:400;letter-spacing:-0.048px;">External Content</div>
<div class="a" id="f47" style="left:478.5px;top:496.00px;font-size:14.8px;line-height:14.8px;color:#585858;font-weight:400;letter-spacing:-0.062px;">File Block Settings</div>
<div class="a" id="f48" style="left:478.5px;top:530.00px;font-size:14.8px;line-height:14.8px;color:#585858;font-weight:400;letter-spacing:-0.066px;">Privacy Options</div>
<div class="a" style="left:658px;top:144px;width:826px;height:755px;background:#fff;border:1px solid #a0a0a0"></div>
<div class="a" style="left:672px;top:157px;width:798px;height:29px;background:#e9e9e9"></div>
<div class="a" id="f49" style="left:678.4px;top:164.00px;font-size:14.5px;line-height:14.5px;color:#5e5e5e;font-weight:700;letter-spacing:0.128px;">Macro Settings</div>
<svg class="a" style="left:708px;top:202.5px;" width="15" height="15" viewBox="0 0 15 15"><circle cx="7.5" cy="7.5" r="6.8" fill="#fff" stroke="#a6a6a6" stroke-width="1.1"/></svg>
<div class="a" id="f50" style="left:732.4px;top:205.00px;font-size:14.8px;line-height:14.8px;color:#585858;font-weight:400;letter-spacing:0.264px;">Disable a<u>l</u>l macros without notification</div>
<svg class="a" style="left:708px;top:231.5px;" width="15" height="15" viewBox="0 0 15 15"><circle cx="7.5" cy="7.5" r="6.8" fill="#fff" stroke="#a6a6a6" stroke-width="1.1"/></svg>
<div class="a" id="f51" style="left:732.4px;top:234.00px;font-size:14.8px;line-height:14.8px;color:#585858;font-weight:400;letter-spacing:0.238px;"><u>D</u>isable all macros with notification</div>
<svg class="a" style="left:708px;top:260.5px;" width="15" height="15" viewBox="0 0 15 15"><circle cx="7.5" cy="7.5" r="6.8" fill="#fff" stroke="#a6a6a6" stroke-width="1.1"/></svg>
<div class="a" id="f52" style="left:732.4px;top:263.00px;font-size:14.8px;line-height:14.8px;color:#585858;font-weight:400;letter-spacing:0.127px;">Disable all macros except di<u>g</u>itally signed macros</div>
<svg class="a" style="left:708px;top:289.5px;" width="15" height="15" viewBox="0 0 15 15"><circle cx="7.5" cy="7.5" r="6.8" fill="#e6e6e6" stroke="#a6a6a6" stroke-width="1.1"/><circle cx="7.5" cy="7.5" r="3" fill="#333"/></svg>
<div class="a" id="f53" style="left:732.4px;top:292.00px;font-size:14.8px;line-height:14.8px;color:#585858;font-weight:400;letter-spacing:0.083px;"><u>E</u>nable all macros (not recommended; potentially dangerous code can run)</div>
<div class="a" style="left:730px;top:287px;width:500px;height:25px;border:1px dotted #222"></div>
<div class="a" style="left:672px;top:326px;width:798px;height:29px;background:#e9e9e9"></div>
<div class="a" id="f54" style="left:678.4px;top:333.00px;font-size:14.5px;line-height:14.5px;color:#5e5e5e;font-weight:700;letter-spacing:0.110px;">Developer Macro Settings</div>
<div class="a" style="left:685px;top:368px;width:16px;height:16px;background:#fff;border:1px solid #555"></div>
<div class="a" id="f55" style="left:708.4px;top:370.00px;font-size:14.8px;line-height:14.8px;color:#585858;font-weight:400;letter-spacing:0.077px;">Trust access to the <u>V</u>BA project object model</div>
<div class="a" style="left:1297px;top:903px;width:88px;height:32px;background:#fcfcfc;border:2px solid #3c6b4e"></div>
<div class="a" style="left:1141px;width:400px;text-align:center;top:913.00px;font-size:14.5px;line-height:14.5px;color:#222;font-weight:400;">OK</div>
<div class="a" style="left:1396px;top:903px;width:88px;height:32px;background:#fcfcfc;border:1px solid #adadad"></div>
<div class="a" style="left:1240px;width:400px;text-align:center;top:913.00px;font-size:14.5px;line-height:14.5px;color:#222;font-weight:400;">Cancel</div>
<svg class="a" style="left:1478px;top:932px;" width="11" height="11" viewBox="0 0 11 11"><g fill="#b8b8b8"><rect x="8" y="0" width="2" height="2"/><rect x="4" y="4" width="2" height="2"/><rect x="8" y="4" width="2" height="2"/><rect x="0" y="8" width="2" height="2"/><rect x="4" y="8" width="2" height="2"/><rect x="8" y="8" width="2" height="2"/></g></svg>
